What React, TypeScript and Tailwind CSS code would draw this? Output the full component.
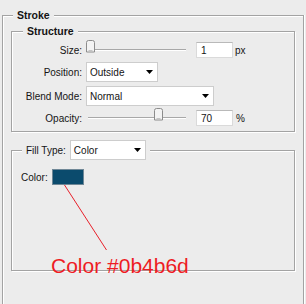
import React from "react";

// etched group box look: grey line + white highlight
const groupBox = "border border-[#a3a3a3] shadow-[inset_1px_1px_0_#fff,1px_1px_0_#fff]";

function DropDown({ value, width }: { value: string; width: string }) {
  return (
    <div className={`flex h-[20px] items-center justify-between border border-[#cdcdcd] bg-white pl-[3px] pr-[4px] ${width}`}>
      <span>{value}</span>
      <svg width="7" height="4" viewBox="0 0 7 4">
        <path d="M0 0h7L3.5 4z" fill="#000" />
      </svg>
    </div>
  );
}

function NumberBox({ value }: { value: string }) {
  return (
    <div className="ml-[10px] flex h-[16px] w-[37px] items-center border border-[#dadada] border-t-[#b9b9b9] bg-white pl-[4px]">
      {value}
    </div>
  );
}

function Slider({ thumbLeft }: { thumbLeft: number }) {
  return (
    <div className="relative ml-[4px] h-full w-[100px]">
      <div className="absolute left-[2px] right-0 top-[7px] h-[2px] border-t border-[#a8a8a8] border-b-white border-b" />
      <svg
        className="absolute top-[-2px]"
        style={{ left: thumbLeft }}
        width="10"
        height="13"
        viewBox="0 0 10 13"
      >
        <path
          d="M2.5 0.5h4a2 2 0 0 1 2 2v9.5h-8v-9.5a2 2 0 0 1 2-2z"
          fill="#f3f3f3"
          stroke="#8c8c8c"
        />
        <path d="M2.5 10.5h4" stroke="#c4c4c4" />
      </svg>
    </div>
  );
}

export default function App() {
  return (
    <div className="relative h-[304px] w-[306px] overflow-hidden bg-[#ececec] pt-[15px] font-['Liberation_Sans',Arial,sans-serif] text-[10px] text-[#141414]">
      {/* Stroke outer box, runs off the bottom */}
      <div className="mx-[2px] h-[300px] border-x border-t border-[#a3a3a3] px-[8px] shadow-[inset_1px_1px_0_#fff,1px_0_0_#fff]">
        <div className="ml-[2px] mt-[-7px] w-fit bg-[#ececec] px-[4px] text-[10.5px] font-bold leading-[13px]">Stroke</div>

        {/* Structure */}
        <fieldset className={`mt-[3px] pl-[9px] pr-[8px] pt-[4px] pb-[5px] ${groupBox}`}>
          <legend className="ml-[2px] bg-[#ececec] px-[4px] text-[10.5px] font-bold leading-[13px]">Structure</legend>
          <div className="flex flex-col gap-[4px]">
            <div className="flex h-[16px] items-center">
              <span className="w-[61px] text-right">Size:</span>
              <Slider thumbLeft={0} />
              <NumberBox value="1" />
              <span className="ml-[2px]">px</span>
            </div>
            <div className="flex h-[20px] items-center">
              <span className="w-[61px] text-right">Position:</span>
              <div className="ml-[4px]">
                <DropDown value="Outside" width="w-[72px]" />
              </div>
            </div>
            <div className="flex h-[20px] items-center">
              <span className="w-[61px] text-right">Blend Mode:</span>
              <div className="ml-[4px]">
                <DropDown value="Normal" width="w-[128px]" />
              </div>
            </div>
            <div className="flex h-[16px] items-center">
              <span className="w-[61px] text-right">Opacity:</span>
              <Slider thumbLeft={68} />
              <NumberBox value="70" />
              <span className="ml-[3px]">%</span>
            </div>
          </div>
        </fieldset>

        {/* Fill */}
        <fieldset className={`mt-[8px] pl-[9px] pt-[9px] pb-[85px] ${groupBox}`}>
          <legend className="ml-[1px] bg-[#ececec] px-[4px]">
            <div className="flex items-center">
              <span>Fill Type:</span>
              <div className="ml-[4px]">
                <DropDown value="Color" width="w-[76px]" />
              </div>
            </div>
          </legend>
          <div className="flex h-[16px] items-center">
            <span>Color:</span>
            <div className="ml-[4px] h-[16px] w-[32px] border border-[#6f8796] bg-[#0b4b6d]" />
          </div>
        </fieldset>
      </div>

      {/* annotation */}
      <svg className="pointer-events-none absolute left-0 top-0" width="306" height="304">
        <line x1="64.5" y1="185" x2="106.5" y2="250" stroke="#e8202a" strokeWidth="1" />
      </svg>
      <div className="absolute left-[51px] top-[255px] text-[21px] leading-[21px] text-[#ee1c24]">
        Color #0b4b6d
      </div>
    </div>
  );
}
